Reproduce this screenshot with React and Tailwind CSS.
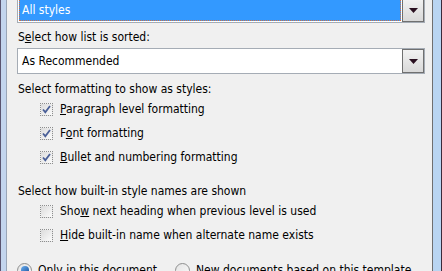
import React from "react";

const font = { fontFamily: "'DejaVu Sans Condensed', 'DejaVu Sans', Tahoma, sans-serif" };

// Win7 style combo box
function Combo({ value, selected }) {
  return (
    <div className="flex h-[26px] border border-[#a5acb5] bg-white ml-[10px] mr-[1px]">
      <div className="flex-1 p-[1px]">
        {selected ? (
          <div className="h-full bg-[#3399ff] border border-dotted border-[#d07040] text-white flex items-center pl-[2px]">
            {value}
          </div>
        ) : (
          <div className="h-full flex items-center pl-[3px]">{value}</div>
        )}
      </div>
      <div className="w-[22px] border border-[#707070] bg-gradient-to-b from-[#f2f2f2] to-[#d9d9d9] flex items-center justify-center">
        <svg width="9" height="5" viewBox="0 0 9 5">
          <path d="M0 0h9L4.5 5z" fill="#2a1020" />
        </svg>
      </div>
    </div>
  );
}

function Check({ checked, children }) {
  return (
    <div className="h-[24px] flex items-center pl-[33px]">
      <div className="w-[13px] h-[13px] border border-dotted border-[#8e8f8f] bg-gradient-to-br from-[#dcdcdc] to-[#fbfbfb] flex items-center justify-center">
        {checked && (
          <svg width="9" height="9" viewBox="0 0 9 9">
            <path d="M1 4.5l2.3 2.7L8 1" fill="none" stroke="#4a5f97" strokeWidth="1.8" />
          </svg>
        )}
      </div>
      <span className="ml-[7px]">{children}</span>
    </div>
  );
}

function Radio({ checked, children }) {
  return (
    <div className="flex items-center">
      <div className="w-[15px] h-[15px] rounded-full border border-[#8e8f8f] bg-gradient-to-br from-[#e4e4e4] to-[#fafafa] flex items-center justify-center">
        {checked && <div className="w-[8px] h-[8px] rounded-full bg-gradient-to-br from-[#6ab0f0] to-[#1a4f9c]" />}
      </div>
      <span className="ml-[6px]">{children}</span>
    </div>
  );
}

export default function App() {
  return (
    <div className="w-[442px] h-[271px] overflow-hidden flex bg-[#f0f0f0] text-[12px] leading-[16px] text-black" style={font}>
      <div className="w-[7px] shrink-0 bg-[#c3d5ee] border-l border-[#5a5470] border-r border-r-[#9aa6b8]" />
      <div className="flex-1 pr-[6px]">
        <div className="-mt-[3px]">
          <Combo value="All styles" selected />
        </div>
        <div className="mt-[6px] pl-[11px]">
          S<u>e</u>lect how list is sorted:
        </div>
        <div className="mt-[3px]">
          <Combo value="As Recommended" />
        </div>
        <div className="mt-[7px] pl-[11px]">Select formatting to show as styles:</div>
        <Check checked>
          <u>P</u>aragraph level formatting
        </Check>
        <Check checked>
          F<u>o</u>nt formatting
        </Check>
        <Check checked>
          <u>B</u>ullet and numbering formatting
        </Check>
        <div className="mt-[14px] pl-[11px]">Select how built-in style names are shown</div>
        <Check>
          Sho<u>w</u> next heading when previous level is used
        </Check>
        <Check>
          <u>H</u>ide built-in name when alternate name exists
        </Check>
        <div className="mt-[15px] pl-[10px] flex gap-[18px]">
          <Radio checked>Only in this document</Radio>
          <Radio>New documents based on this template</Radio>
        </div>
      </div>
      <div className="w-[10px] shrink-0 bg-[#b9d5f2] border-l border-[#6f6f6f] border-r border-r-[#3a2a3a]" />
    </div>
  );
}
